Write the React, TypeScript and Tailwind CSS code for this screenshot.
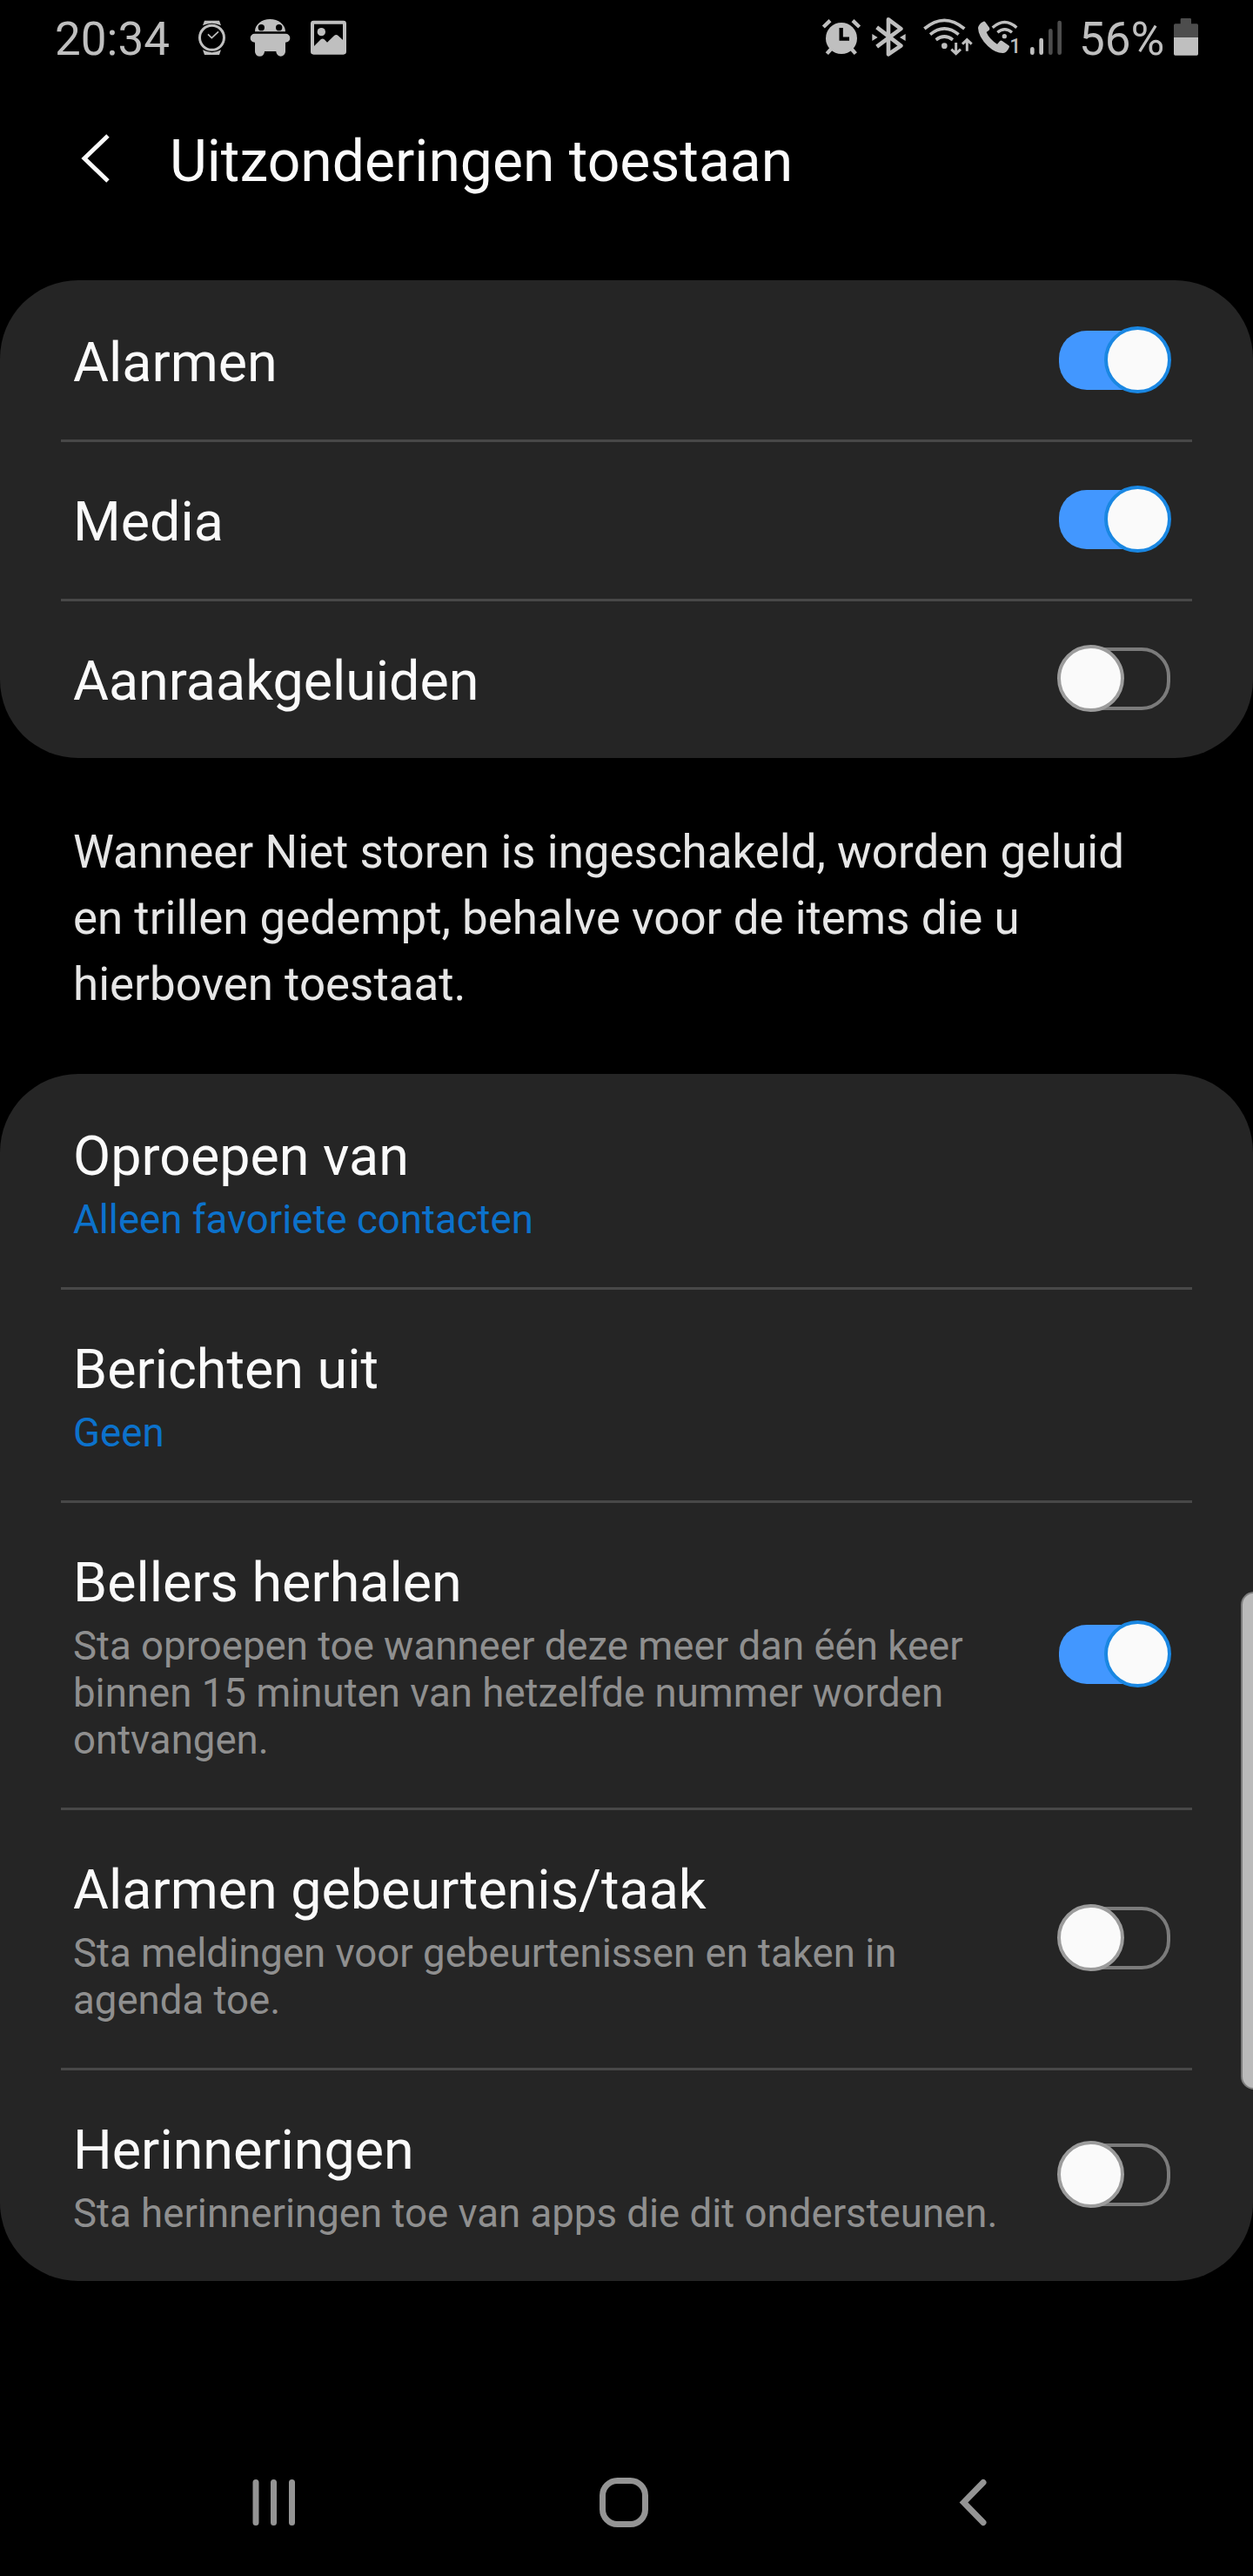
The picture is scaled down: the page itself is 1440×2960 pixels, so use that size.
import React, { useState } from 'react';

const StatusBar = () => (
  <div className="flex h-[90px] items-start pl-[63px] pr-[62px] pt-5 text-[53px] leading-[50px] text-[#bfbfbf]">
    <span className="w-[164px] whitespace-nowrap">20:34</span>

    {/* watch */}
    <svg className="h-[45px] w-[33px]" viewBox="561 60 99 135" fill="none">
      <path d="M585 71h51l6 17q-32-16-63 0zM579 172q32 17 63 0l-6 17h-51z" fill="#bfbfbf" />
      <circle cx="610.500" cy="130" r="42" stroke="#bfbfbf" strokeWidth="9" />
      <path d="M597 118l13 13 23-22" stroke="#bfbfbf" strokeWidth="5" />
    </svg>

    {/* android */}
    <svg className="ml-[27px] h-[45px] w-[47px]" viewBox="741 60 141 135" fill="#bfbfbf">
      <path fillRule="evenodd" d="M759 109c0-25 24-43 52-43s53 18 53 43zM792 95a11 11 0 1 0-22 0 11 11 0 0 0 22 0zM853 95a11 11 0 1 0-22 0 11 11 0 0 0 22 0z" />
      <path d="M758 116h107a14 14 0 0 1 0 30h-1v32a16 16 0 0 1-32 0v-1h-40v1a16 16 0 0 1-33 0v-32h-1a14 14 0 0 1 0-30z" />
    </svg>

    {/* picture */}
    <svg className="ml-[22px] h-[45px] w-[43px]" viewBox="948 60 129 135" fill="none">
      <rect x="957" y="77" width="111" height="105" rx="4" stroke="#bfbfbf" strokeWidth="12" />
      <circle cx="988" cy="110" r="14" fill="#bfbfbf" />
      <path d="M960 162l26-26q6-5 12 0l10 10 24-23q7-6 14 0l22 20v40H960z" fill="#bfbfbf" />
    </svg>

    <div className="ml-auto flex items-start">
      {/* alarm */}
      <svg className="h-[45px] w-[46px]" viewBox="72 60 138 135" fill="#bfbfbf">
        <circle cx="141" cy="132" r="54" />
        <path d="M79 93l23-22M203 93l-23-22M91 185l15-17M190 185l-15-17" stroke="#bfbfbf" strokeWidth="13" />
        <path d="M140 96v38h28" fill="none" stroke="#000" strokeWidth="13" />
      </svg>
      {/* bluetooth */}
      <svg className="ml-[11px] h-[45px] w-[41px]" viewBox="243 60 123 135" fill="none">
        <path d="M263 94l83 64-43 29V67l43 32-83 62" stroke="#bfbfbf" strokeWidth="14" strokeLinejoin="round" />
        <path d="M247 117l19 12-19 12zM362 117l-20 12 20 12z" fill="#bfbfbf" />
      </svg>
      {/* wifi with traffic arrows */}
      <svg className="ml-[18px] h-[45px] w-[58px]" viewBox="420 60 174 135" fill="none" stroke="#bfbfbf" strokeWidth="11">
        <path d="M427 99q69-58 138 0M447 119q49-41 98 0M467 137q29-22 58 0" />
        <circle cx="496" cy="158" r="10" fill="#bfbfbf" stroke="none" />
        <path d="M536 147v37M520 170l16 15 16-15M574 176v-38M558 152l16-15 16 15" strokeWidth="9" />
      </svg>
      {/* wifi calling */}
      <svg className="ml-[5px] h-[50px] w-[54px]" viewBox="69 60 162 150" fill="none">
        <path d="M91 74q4-1 7 3l13 18q3 5-1 9l-9 7q9 23 37 41l9-10q4-4 8-1l23 16q4 3 1 7-8 18-20 19-26 1-53-24Q73 127 72 96q3-15 19-22z" fill="#bfbfbf" />
        <path d="M122 95q42-37 83 0M139 112q25-21 50 0" stroke="#bfbfbf" strokeWidth="10" />
        <circle cx="163" cy="125" r="8" fill="#bfbfbf" />
        <text x="181" y="183" fontSize="69" fontWeight="500" fill="#bfbfbf">1</text>
      </svg>
      {/* signal */}
      <svg className="ml-1.5 h-[45px] w-[38px]" viewBox="249 60 114 135" strokeWidth="14" strokeLinecap="round">
        <path d="M259 169v13M290 138v44" stroke="#bfbfbf" />
        <path d="M322 106v76M353 78v104" stroke="#4d4d4d" />
      </svg>
      <span className="ml-[19px] w-[108px] whitespace-nowrap">56%</span>
      {/* battery */}
      <svg className="h-[45px] w-[30px]" viewBox="744 60 90 135">
        <path d="M747 130V87q0-5 5-5h18V67q0-4 4-4h29q4 0 4 4v15h19q5 0 5 5v43z" fill="#4d4d4d" />
        <path d="M747 129h84v57q0 5-5 5h-74q-5 0-5-5z" fill="#bfbfbf" />
      </svg>
    </div>
  </div>
);

const Toggle = ({ on, onClick }: { on: boolean; onClick: () => void }) => (
  <button
    role="switch"
    aria-checked={on}
    onClick={onClick}
    className="relative flex h-[77px] w-[131px] shrink-0 items-center"
  >
    {on ? (
      <>
        <span className="ml-0.5 h-[68px] w-[126px] rounded-[32px] bg-[#4297ff]" />
        <span className="absolute right-0 top-0 size-[77px] rounded-full border-4 border-[#1a87e2] bg-[#fafafa]" />
      </>
    ) : (
      <>
        <span className="ml-0.5 h-[72px] w-[128px] rounded-[33px] border-4 border-[#7b7b7b]" />
        <span className="absolute left-0 top-0 size-[77px] rounded-full border-4 border-[#9c9c9c] bg-[#fafafa]" />
      </>
    )}
  </button>
);

type Item = {
  title: string;
  value?: string;
  description?: string;
  on?: boolean;
  height: string;
};

const soundItems: Item[] = [
  { title: 'Alarmen', on: true, height: 'h-[183px]' },
  { title: 'Media', on: true, height: 'h-[183px]' },
  { title: 'Aanraakgeluiden', on: false, height: 'h-[183px]' },
];

const callItems: Item[] = [
  { title: 'Oproepen van', value: 'Alleen favoriete contacten', height: 'h-[245px]' },
  { title: 'Berichten uit', value: 'Geen', height: 'h-[245px]' },
  {
    title: 'Bellers herhalen',
    description: 'Sta oproepen toe wanneer deze meer dan één keer binnen 15 minuten van hetzelfde nummer worden ontvangen.',
    on: true,
    height: 'h-[353px]',
  },
  {
    title: 'Alarmen gebeurtenis/taak',
    description: 'Sta meldingen voor gebeurtenissen en taken in agenda toe.',
    on: false,
    height: 'h-[299px]',
  },
  {
    title: 'Herinneringen',
    description: 'Sta herinneringen toe van apps die dit ondersteunen.',
    on: false,
    height: 'h-[245px]',
  },
];

const Row = ({ item, first }: { item: Item; first: boolean }) => {
  const [on, setOn] = useState(!!item.on);

  return (
    <div className={`${item.height} flex flex-col`}>
      {!first && <div className="mx-[70px] -mb-[3px] h-[3px] shrink-0 bg-[#484848]" />}
      <div className="flex flex-1 items-center justify-between pl-[84px] pr-[94px]">
        <div className="w-[1070px] pt-1.5">
          <div className="text-[62.800px] leading-[75px] text-[#fafafa]">{item.title}</div>
          {item.value && <div className="mt-[9px] text-[45.600px] leading-[54px] text-[#0c72cc]">{item.value}</div>}
          {item.description && (
            <div className="mt-[9px] text-[45.600px] leading-[54px] text-[#8f8f8f]">{item.description}</div>
          )}
        </div>
        {item.on !== undefined && <Toggle on={on} onClick={() => setOn(!on)} />}
      </div>
    </div>
  );
};

const Card = ({ items }: { items: Item[] }) => (
  <div className="rounded-[90px] bg-[#252525]">
    {items.map((item, i) => (
      <Row key={item.title} item={item} first={i === 0} />
    ))}
  </div>
);

const NavBar = () => (
  <div className="mt-auto flex h-[170px] items-center pl-[286px]">
    <svg className="h-[60px] w-[58px]" viewBox="0 0 58 60" stroke="#949494" strokeWidth="7" strokeLinecap="round">
      <path d="M8 7.500v46M28.500 7.500v46M49.500 7.500v46" />
    </svg>
    <svg className="ml-[343px] h-[60px] w-[60px]" viewBox="0 0 60 60" fill="none">
      <rect x="5.500" y="5.500" width="49" height="50" rx="17" stroke="#949494" strokeWidth="7" />
    </svg>
    <svg className="ml-[353px] h-[60px] w-[38px]" viewBox="0 0 38 60" fill="none" stroke="#949494" strokeWidth="7" strokeLinecap="round">
      <path d="M30 7.500L7.500 30.500l22.500 23" />
    </svg>
  </div>
);

export default function App() {
  return (
    <div className="relative flex h-[2960px] w-[1440px] flex-col overflow-hidden bg-black font-['Roboto',sans-serif]">
      <StatusBar />

      <div className="flex h-[232px] items-start pl-[90px] pt-[60px]">
        <svg className="h-16 w-10" viewBox="0 0 40 64" fill="none">
          <path d="M34 6L7 32l27 26" stroke="#fafafa" strokeWidth="5" />
        </svg>
        <h1 className="ml-[65px] text-[66px] leading-[71px] text-[#fafafa]">Uitzonderingen toestaan</h1>
      </div>

      <Card items={soundItems} />

      <p className="h-[363px] w-[1360px] pl-[84px] pt-[70px] text-[52.900px] leading-[76px] text-[#e6e6e6]">
        Wanneer Niet storen is ingeschakeld, worden geluid
        <br />
        en trillen gedempt, behalve voor de items die u
        <br />
        hierboven toestaat.
      </p>

      <Card items={callItems} />

      {/* edge panel handle */}
      <div className="absolute -right-4 top-[1829px] h-[572px] w-[30px] rounded-2xl border-2 border-[#7c7c7c] bg-[#bababa]" />

      <NavBar />
    </div>
  );
}
